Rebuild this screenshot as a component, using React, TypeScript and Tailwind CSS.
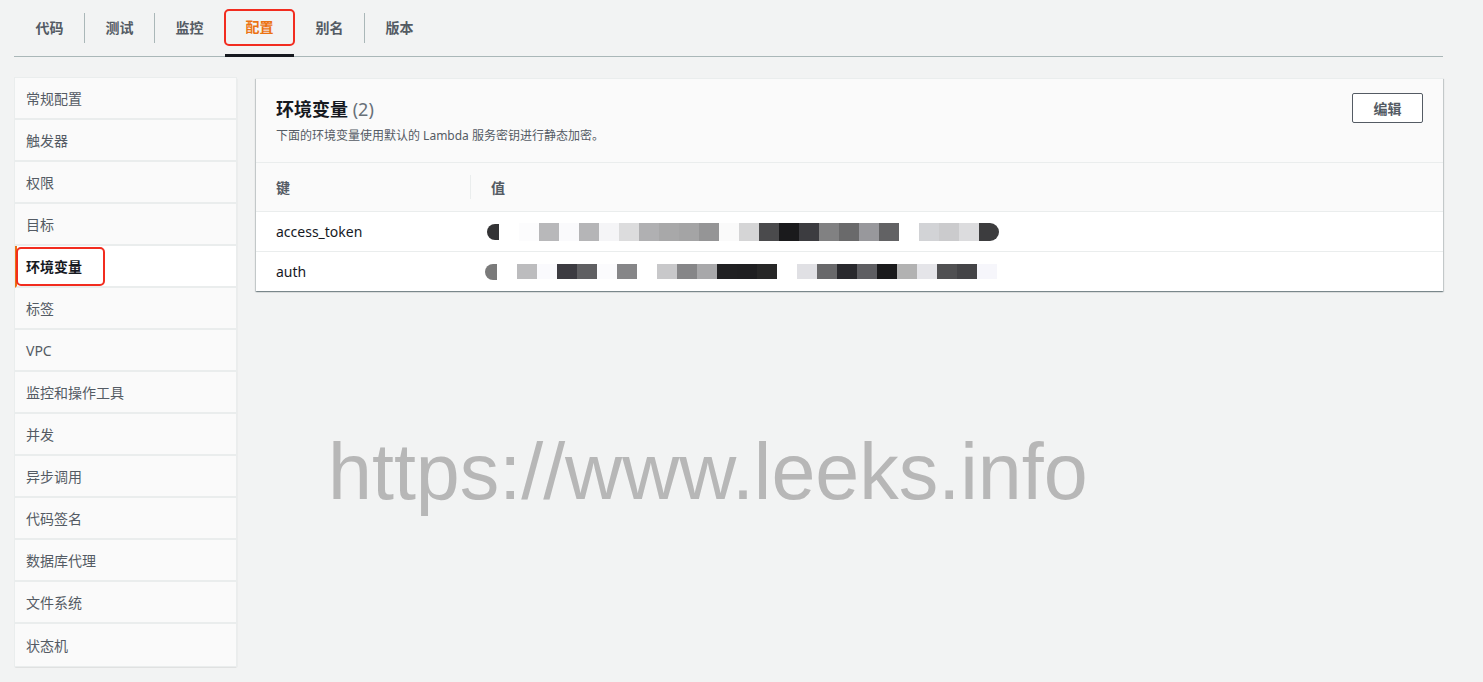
import React from "react";

const tabs = ["代码", "测试", "监控", "配置", "别名", "版本"];
const activeTab = 3;

const navItems = [
  "常规配置",
  "触发器",
  "权限",
  "目标",
  "环境变量",
  "标签",
  "VPC",
  "监控和操作工具",
  "并发",
  "异步调用",
  "代码签名",
  "数据库代理",
  "文件系统",
  "状态机",
];
const activeNav = 4;

// redacted values, drawn as 20px pixel blocks
const row1 = [
  "#fcfcfd", "#b8b8ba", "#fafafc", "#b5b5b7", "#f5f5f7", "#dcdcdd", "#b0b0b2", "#a8a8a9",
  "#a4a4a5", "#959596", "#fafafa", "#d5d5d6", "#4a4a4c", "#1a1a1c", "#3c3c40", "#818182",
  "#6a6a6b", "#98989c", "#626264", "#ffffff", "#d2d3d6", "#cbcbcd", "#dcdcde",
];
const row2 = [
  "#bcbcbe", "#fafafd", "#3c3b41", "#5f5f62", "#fbfbfd", "#868688", "#ffffff", "#c8c8ca",
  "#868688", "#a8a8aa", "#202022", "#1f1f21", "#272727", "#ffffff", "#e0e0e4", "#68686a",
  "#29292d", "#5e5e62", "#1a1a1c", "#b2b2b2", "#e5e5e9", "#505052", "#444447", "#f6f6fb",
];

const font = "font-['Noto_Sans','Noto_Sans_CJK_SC',sans-serif]";

function Redacted({ blocks, dot, end, h }: { blocks: string[]; dot: string; end?: string; h: string }) {
  return (
    <div className="flex items-center">
      <div className="w-[12px] h-[16px] rounded-l-full" style={{ background: dot }} />
      <div className="w-[20px]" />
      {blocks.map((c, i) => (
        <div key={i} className={`w-[20px] ${h}`} style={{ background: c }} />
      ))}
      {end && <div className={`w-[20px] ${h} rounded-r-full`} style={{ background: end }} />}
    </div>
  );
}

export default function App() {
  return (
    <div className={`relative w-full h-[682px] overflow-hidden bg-[#f2f3f3] pl-[14px] pr-[40px] ${font}`}>
      {/* tabs */}
      <div className="flex items-stretch h-[57px] border-b border-[#aab7b8]">
        <div className="w-px" />
        {tabs.map((t, i) => {
          const active = i === activeTab;
          const showSep = i > 0 && i !== activeTab && i - 1 !== activeTab;
          return (
            <React.Fragment key={t}>
              {i > 0 && (
                <div className="flex items-center">
                  <div className={`w-px h-[30px] ${showSep ? "bg-[#aab7b8]" : "bg-transparent"}`} />
                </div>
              )}
              <div
                className={`relative w-[69px] flex items-center justify-center pb-[2px] text-[14px] font-bold ${
                  active ? "text-[#ec7211] border-b-[3px] border-[#16191f] -mb-px" : "text-[#545b64]"
                }`}
              >
                {t}
                {active && (
                  <div className="absolute left-[-1px] top-[9px] w-[71px] h-[37px] border-2 border-[#f22c1f] rounded-[5px]" />
                )}
              </div>
            </React.Fragment>
          );
        })}
      </div>

      <div className="flex items-start gap-[20px] pt-[21px] pl-px">
        {/* side nav */}
        <div className="w-[221px] bg-[#fafafa] shadow-[0_0_0_1px_#eaeded,0_1px_1px_0_rgba(0,28,36,0.3),1px_1px_1px_0_rgba(0,28,36,0.15)]">
          {navItems.map((n, i) => {
            const active = i === activeNav;
            return (
              <div
                key={n}
                className={`relative h-[42px] flex items-center px-[11px] text-[14px] ${
                  i < navItems.length - 1 ? "border-b-2 border-[#eaeded]" : ""
                } ${active ? "bg-white font-bold text-[#16191f] border-l-2 border-l-[#ec7211] pl-[9px]" : "text-[#545b64]"}`}
              >
                {n}
                {active && (
                  <div className="absolute left-[-1px] top-[1px] w-[89px] h-[39px] border-2 border-[#f22c1f] rounded-[5px]" />
                )}
              </div>
            );
          })}
        </div>

        {/* main panel */}
        <div className="flex-1 bg-white border-t border-[#eaeded] shadow-[0_1px_1px_0_rgba(0,28,36,0.3),1px_1px_1px_0_rgba(0,28,36,0.15),-1px_1px_1px_0_rgba(0,28,36,0.15)]">
          <div className="flex justify-between bg-[#fafafa] h-[84px] border-b border-[#eaeded] pl-[20px] pr-[20px]">
            <div className="pt-[19px]">
              <div className="text-[18px] leading-[22px] font-bold text-[#16191f]">
                环境变量 <span className="font-normal text-[#687078]">(2)</span>
              </div>
              <div className="mt-[8px] text-[12px] leading-[16px] text-[#545b64]">
                下面的环境变量使用默认的 Lambda 服务密钥进行静态加密。
              </div>
            </div>
            <div className="pt-[14px]">
              <button className="w-[71px] h-[30px] bg-white border border-[#545b64] rounded-[2px] text-[14px] font-bold text-[#545b64]">
                编辑
              </button>
            </div>
          </div>
          <div className="flex items-center h-[49px] bg-[#fafafa] border-b border-[#eaeded] text-[14px] font-bold text-[#545b64]">
            <div className="w-[215px] pl-[20px] flex items-center justify-between">
              键
              <div className="w-px h-[24px] bg-[#eaeded]" />
            </div>
            <div className="pl-[20px]">值</div>
          </div>
          <div className="flex items-center h-[40px] border-b border-[#eaeded] text-[14px] text-[#16191f]">
            <div className="w-[215px] pl-[20px]">access_token</div>
            <div className="pl-[16px]">
              <Redacted blocks={row1} dot="#333335" end="#3c3c3e" h="h-[18px]" />
            </div>
          </div>
          <div className="flex items-center h-[39px] text-[14px] text-[#16191f]">
            <div className="w-[215px] pl-[20px]">auth</div>
            <div className="pl-[14px]">
              <Redacted blocks={row2} dot="#7a7a7a" h="h-[15px]" />
            </div>
          </div>
        </div>
      </div>

      {/* watermark */}
      <div className="absolute left-[328px] top-[432px] text-[79px] leading-none font-['Liberation_Sans',Arial,sans-serif] text-[#a8a8a8]/80 pointer-events-none">
        https://www.leeks.info
      </div>
    </div>
  );
}
